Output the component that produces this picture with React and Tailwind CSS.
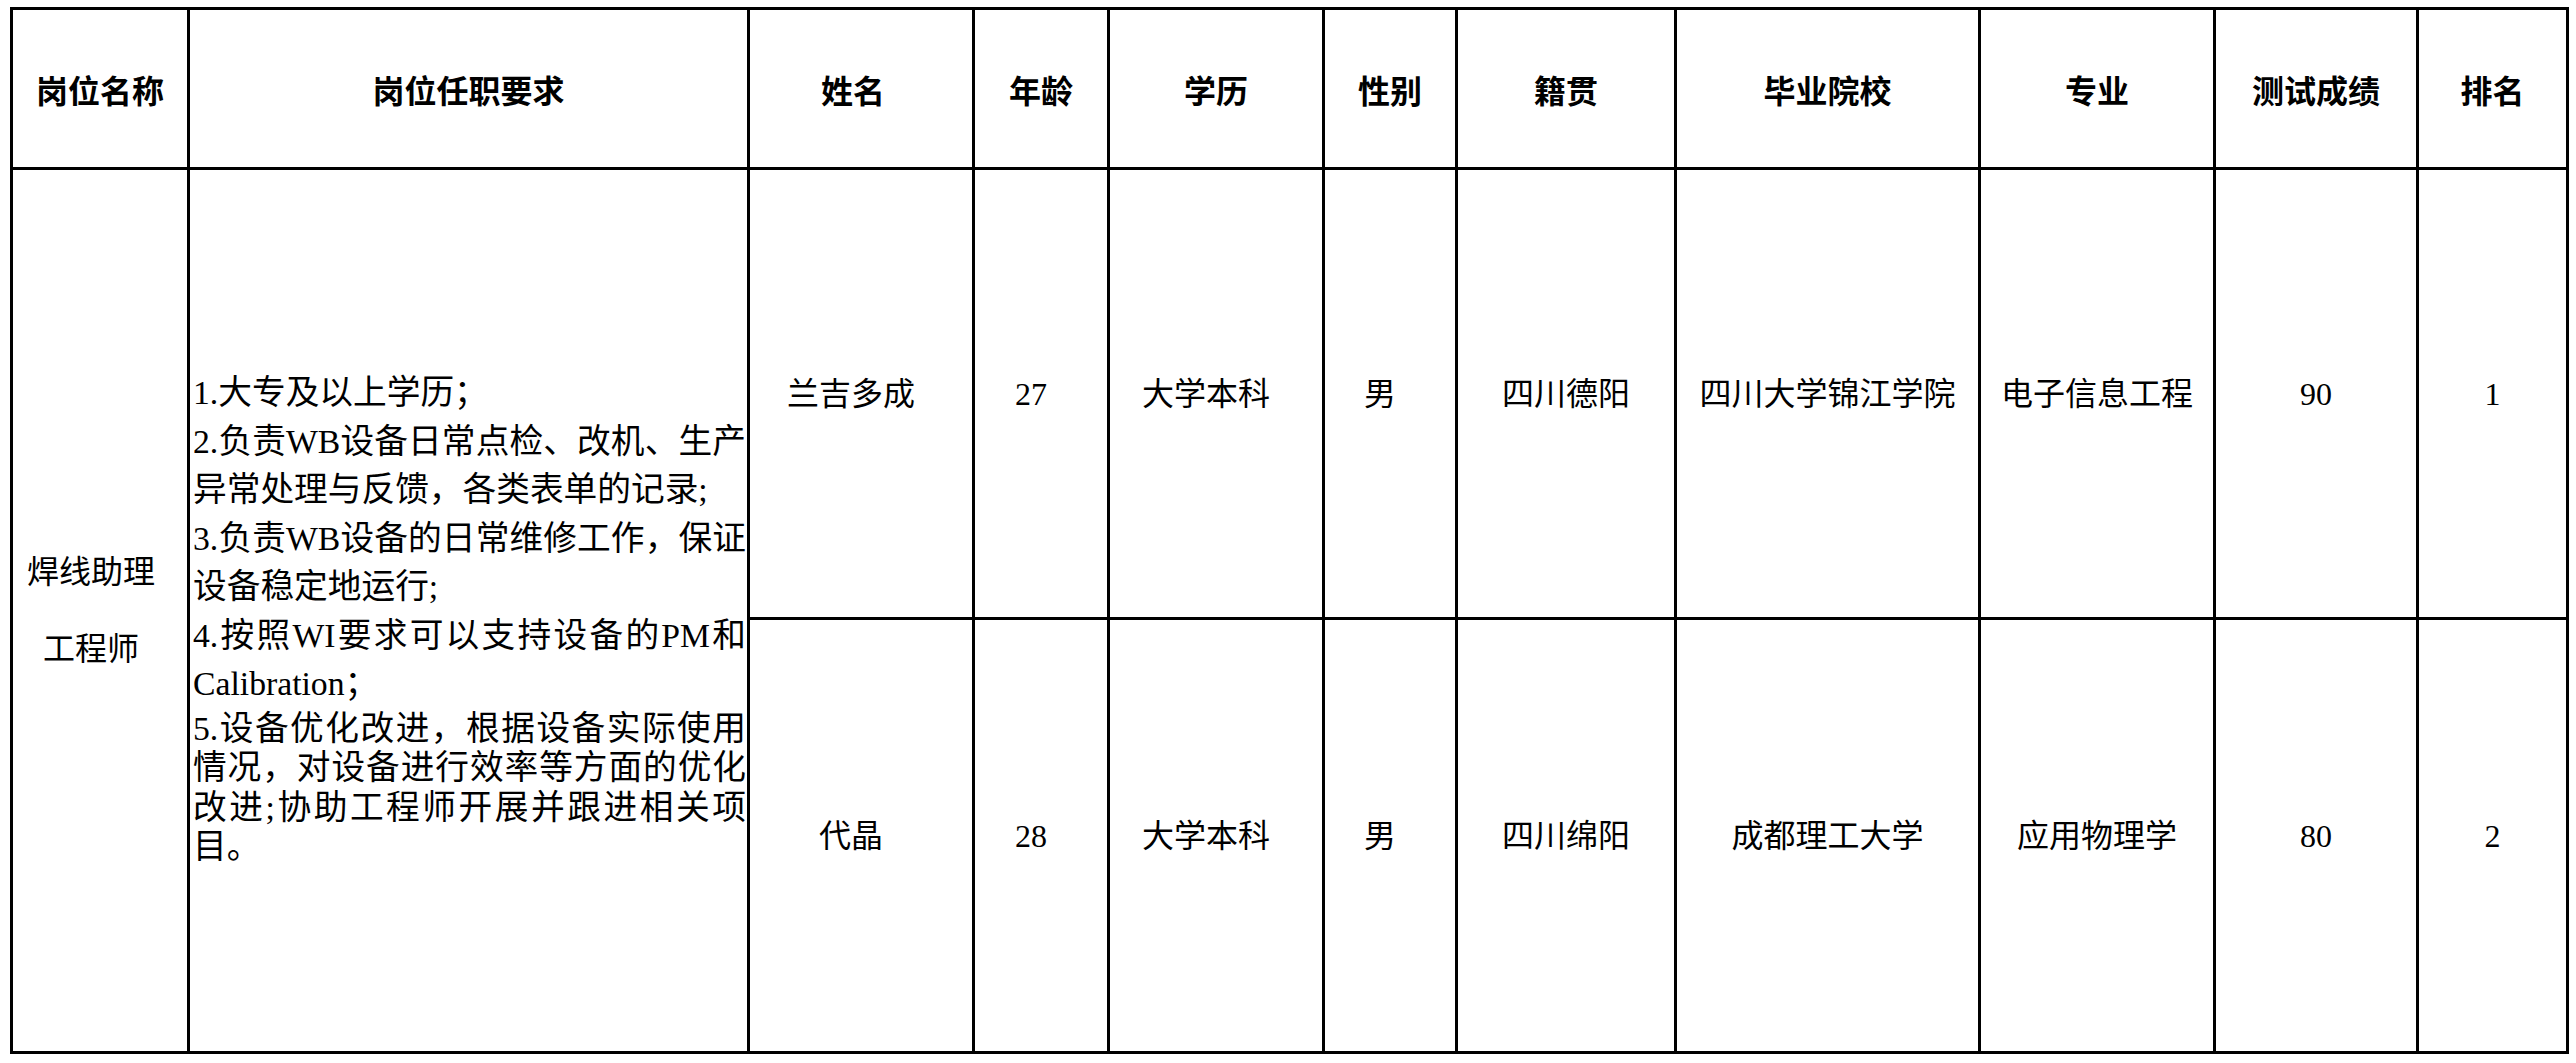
import React from 'react';

const headers = ['岗位名称', '岗位任职要求', '姓名', '年龄', '学历', '性别', '籍贯', '毕业院校', '专业', '测试成绩', '排名'];

const candidates = [
  ['兰吉多成', '27', '大学本科', '男', '四川德阳', '四川大学锦江学院', '电子信息工程', '90', '1'],
  ['代晶', '28', '大学本科', '男', '四川绵阳', '成都理工大学', '应用物理学', '80', '2'],
];

// each requirement is a paragraph; lines are split as in the original sheet
const requirements = [
  { lead: 'leading-[48.5px]', lines: ['1.大专及以上学历；'] },
  { lead: 'leading-[48.5px]', lines: ['2.负责WB设备日常点检、改机、生产', '异常处理与反馈，各类表单的记录;'] },
  { lead: 'leading-[48.5px]', lines: ['3.负责WB设备的日常维修工作，保证', '设备稳定地运行;'] },
  { lead: 'leading-[48.5px]', lines: ['4.按照WI要求可以支持设备的PM和', 'Calibration；'] },
  {
    lead: 'leading-[39.5px]',
    lines: ['5.设备优化改进，根据设备实际使用', '情况，对设备进行效率等方面的优化', '改进;协助工程师开展并跟进相关项', '目。'],
  },
];

const serif = "font-['Liberation_Serif','Noto_Sans_CJK_SC',serif]";

export default function App() {
  return (
    <div className="bg-white min-h-screen pt-[7px] pl-[10px]">
      <div className="grid w-max grid-cols-[174px_557px_222px_132px_212px_130px_216px_301px_232px_200px_147px] grid-rows-[157px_447px_431px] gap-[3px] bg-black p-[3px] text-black">
        {headers.map((h) => (
          <div
            key={h}
            className={`bg-white flex items-center justify-center font-['Noto_Sans_CJK_SC',sans-serif] font-bold text-[32px] ${
              h === '姓名' ? 'pr-[16px]' : ''
            }`}
          >
            {h}
          </div>
        ))}

        {/* job title */}
        <div className={`row-span-2 bg-white flex items-center justify-center pr-[18px] text-center text-[32px] leading-[77px] ${serif}`}>
          <div>
            焊线助理
            <br />
            工程师
          </div>
        </div>

        {/* requirements */}
        <div className={`row-span-2 bg-white flex items-center overflow-hidden pl-[3px] pt-[15px] text-[33.7px] ${serif}`}>
          <div className="w-[553px]">
            {requirements.map((p, i) => (
              <div key={i} className={p.lead}>
                {p.lines.map((line, j) => (
                  <span
                    key={j}
                    className={
                      j < p.lines.length - 1
                        ? 'block whitespace-nowrap text-justify [text-align-last:justify]'
                        : 'block whitespace-nowrap'
                    }
                  >
                    {line}
                  </span>
                ))}
              </div>
            ))}
          </div>
        </div>

        {candidates.map((row) =>
          row.map((cell, k) => (
            <div
              key={row[0] + k}
              className={`bg-white flex items-center justify-center text-[32px] whitespace-nowrap ${serif} ${
                k < 4 ? 'pr-[20px]' : ''
              }`}
            >
              {cell}
            </div>
          ))
        )}
      </div>
    </div>
  );
}
